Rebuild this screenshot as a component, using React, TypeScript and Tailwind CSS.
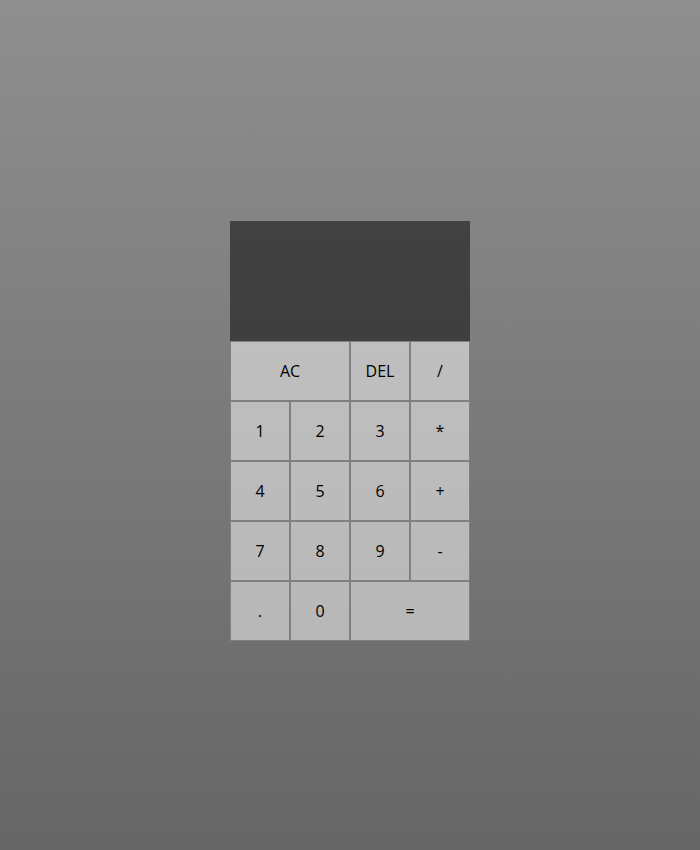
const keys: { label: string; wide?: boolean }[] = [
  { label: "AC", wide: true },
  { label: "DEL" },
  { label: "/" },
  { label: "1" },
  { label: "2" },
  { label: "3" },
  { label: "*" },
  { label: "4" },
  { label: "5" },
  { label: "6" },
  { label: "+" },
  { label: "7" },
  { label: "8" },
  { label: "9" },
  { label: "-" },
  { label: "." },
  { label: "0" },
  { label: "=", wide: true },
];

export default function App() {
  return (
    <div className="min-h-[850px] w-full bg-linear-to-b from-[#8f8f8f] to-[#666666] pt-[221px] font-['Open_Sans',sans-serif]">
      <div className="mx-auto grid w-[240px] grid-cols-[repeat(4,60px)] grid-rows-[120px_repeat(5,60px)]">
        {/* output */}
        <div className="col-span-4 bg-black/50" />
        {keys.map((k) => (
          <button
            key={k.label}
            className={`${k.wide ? "col-span-2" : ""} border border-[#808080] bg-white/50 text-[16px] text-black outline-none`}
          >
            {k.label}
          </button>
        ))}
      </div>
    </div>
  );
}
